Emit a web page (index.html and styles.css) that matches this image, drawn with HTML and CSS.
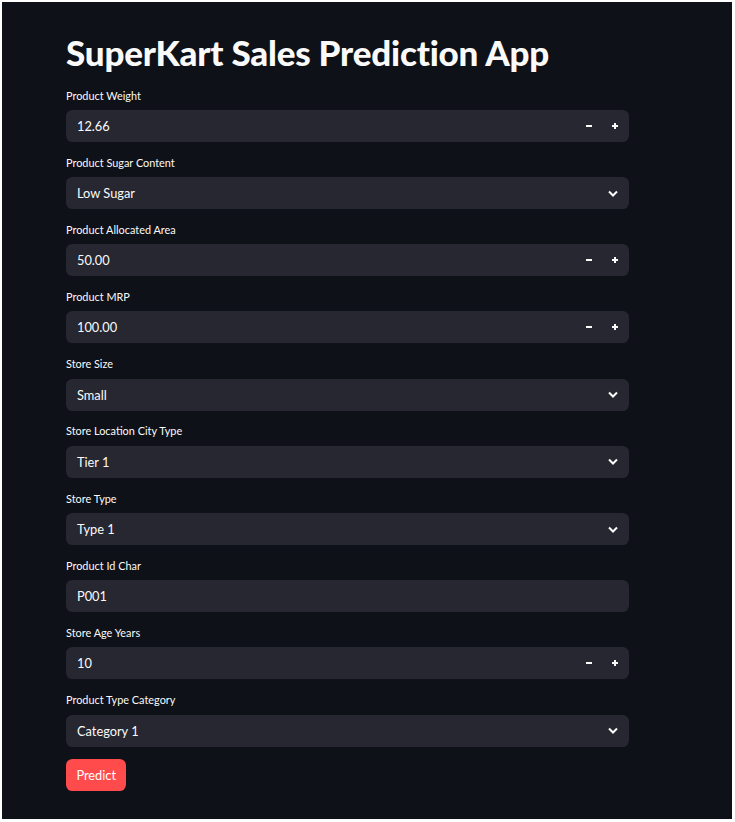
FILE: index.html
```html
<!DOCTYPE html>
<html>
<head>
<meta charset="utf-8">
<link rel="stylesheet" href="styles.css">
</head>
<body>
<div class="app">
  <div class="main">
    <h1 class="title">SuperKart Sales Prediction App</h1>
    <div class="fields">
      <div class="field">
        <div class="label">Product Weight</div>
        <div class="input number"><span class="value">12.66</span>
          <span class="step"><svg width="8" height="8" viewBox="0 0 8 8"><path d="M1 4h6" stroke="#fafafa" stroke-width="2"/></svg></span>
          <span class="step"><svg width="8" height="8" viewBox="0 0 8 8"><path d="M1 4h6M4 1v6" stroke="#fafafa" stroke-width="2"/></svg></span>
        </div>
      </div>
      <div class="field">
        <div class="label">Product Sugar Content</div>
        <div class="input select"><span class="value">Low Sugar</span>
          <span class="chev"><svg width="10" height="7" viewBox="0 0 10 7"><path d="M1 1.5l4 4 4-4" fill="none" stroke="#fafafa" stroke-width="2"/></svg></span>
        </div>
      </div>
      <div class="field">
        <div class="label">Product Allocated Area</div>
        <div class="input number"><span class="value">50.00</span>
          <span class="step"><svg width="8" height="8" viewBox="0 0 8 8"><path d="M1 4h6" stroke="#fafafa" stroke-width="2"/></svg></span>
          <span class="step"><svg width="8" height="8" viewBox="0 0 8 8"><path d="M1 4h6M4 1v6" stroke="#fafafa" stroke-width="2"/></svg></span>
        </div>
      </div>
      <div class="field">
        <div class="label">Product MRP</div>
        <div class="input number"><span class="value">100.00</span>
          <span class="step"><svg width="8" height="8" viewBox="0 0 8 8"><path d="M1 4h6" stroke="#fafafa" stroke-width="2"/></svg></span>
          <span class="step"><svg width="8" height="8" viewBox="0 0 8 8"><path d="M1 4h6M4 1v6" stroke="#fafafa" stroke-width="2"/></svg></span>
        </div>
      </div>
      <div class="field">
        <div class="label">Store Size</div>
        <div class="input select"><span class="value">Small</span>
          <span class="chev"><svg width="10" height="7" viewBox="0 0 10 7"><path d="M1 1.5l4 4 4-4" fill="none" stroke="#fafafa" stroke-width="2"/></svg></span>
        </div>
      </div>
      <div class="field">
        <div class="label">Store Location City Type</div>
        <div class="input select"><span class="value">Tier 1</span>
          <span class="chev"><svg width="10" height="7" viewBox="0 0 10 7"><path d="M1 1.5l4 4 4-4" fill="none" stroke="#fafafa" stroke-width="2"/></svg></span>
        </div>
      </div>
      <div class="field">
        <div class="label">Store Type</div>
        <div class="input select"><span class="value">Type 1</span>
          <span class="chev"><svg width="10" height="7" viewBox="0 0 10 7"><path d="M1 1.5l4 4 4-4" fill="none" stroke="#fafafa" stroke-width="2"/></svg></span>
        </div>
      </div>
      <div class="field">
        <div class="label">Product Id Char</div>
        <div class="input text"><span class="value">P001</span></div>
      </div>
      <div class="field">
        <div class="label">Store Age Years</div>
        <div class="input number"><span class="value">10</span>
          <span class="step"><svg width="8" height="8" viewBox="0 0 8 8"><path d="M1 4h6" stroke="#fafafa" stroke-width="2"/></svg></span>
          <span class="step"><svg width="8" height="8" viewBox="0 0 8 8"><path d="M1 4h6M4 1v6" stroke="#fafafa" stroke-width="2"/></svg></span>
        </div>
      </div>
      <div class="field">
        <div class="label">Product Type Category</div>
        <div class="input select"><span class="value">Category 1</span>
          <span class="chev"><svg width="10" height="7" viewBox="0 0 10 7"><path d="M1 1.5l4 4 4-4" fill="none" stroke="#fafafa" stroke-width="2"/></svg></span>
        </div>
      </div>
      <div class="actions">
        <button class="btn">Predict</button>
      </div>
    </div>
  </div>
</div>
</body>
</html>
```

FILE: styles.css
```css
html, body {
  margin: 0;
  padding: 0;
  background: #ffffff;
}
body {
  font-family: Lato, "Open Sans", sans-serif;
  color: #fafafa;
}
.app {
  margin: 2px 3px 3px 2px;
  height: 817px;
  background: #0e1117;
  overflow: hidden;
}
.main {
  width: 563px;
  margin-left: 64px;
  padding-top: 28.5px;
}
.title {
  margin: 0;
  font-size: 35px;
  line-height: 42px;
  font-weight: 900;
  color: #fafafa;
  letter-spacing: -0.2px;
}
.fields {
  margin-top: 15px;
  display: flex;
  flex-direction: column;
  gap: 12.8px;
}
.field {
  display: flex;
  flex-direction: column;
}
.label {
  font-size: 10.9px;
  line-height: 16px;
  height: 16px;
  margin-bottom: 6.4px;
  color: #fafafa;
}
.input {
  height: 32px;
  border-radius: 6.4px;
  background: #262730;
  display: flex;
  align-items: center;
  padding-left: 11px;
  font-size: 12.8px;
  line-height: 32px;
}
.value {
  flex: 1;
}
.number {
  padding-right: 1.4px;
}
.step {
  width: 25.6px;
  height: 32px;
  display: flex;
  align-items: center;
  justify-content: center;
}
.select {
  padding-right: 11px;
}
.chev {
  display: flex;
  align-items: center;
  justify-content: center;
}
.actions {
  display: flex;
}
.btn {
  height: 32px;
  padding: 0 10.4px;
  background: #ff4b4b;
  color: #ffffff;
  border: none;
  border-radius: 6.4px;
  font-family: Lato, "Open Sans", sans-serif;
  font-size: 12.8px;
}
```
